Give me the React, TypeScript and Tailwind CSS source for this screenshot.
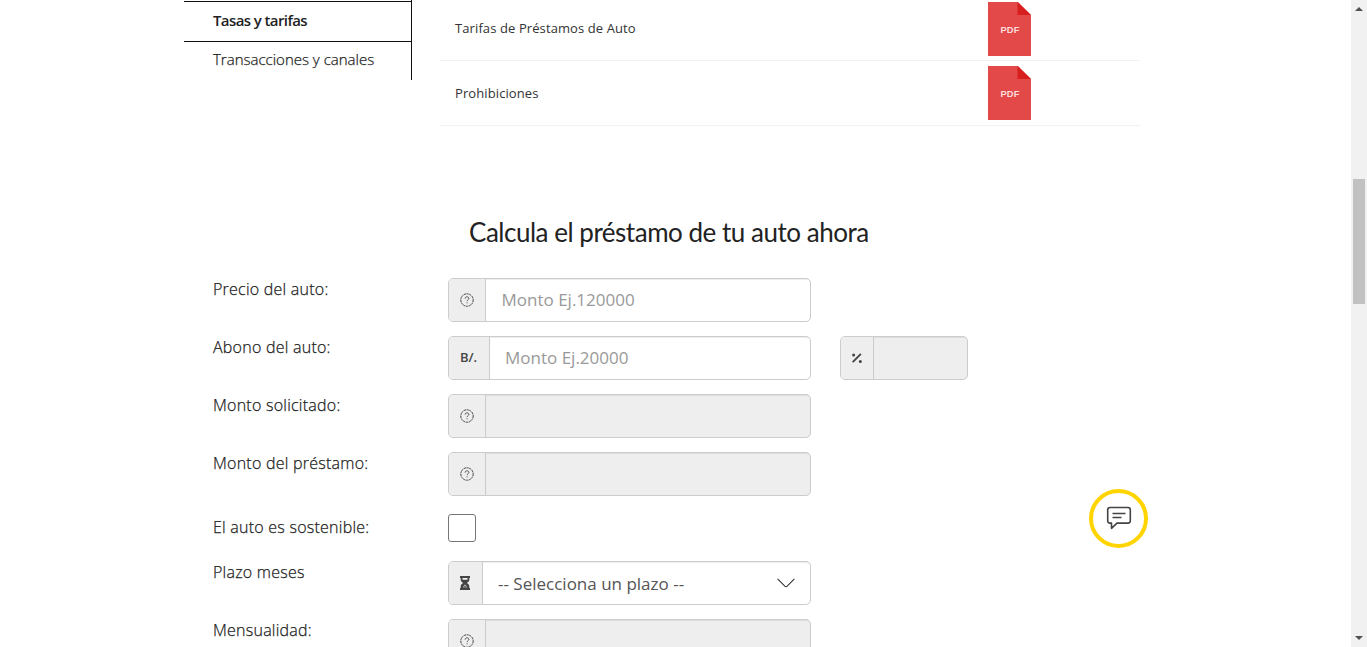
import type { ReactNode } from "react";

function QuestionIcon() {
  return (
    <svg width="14" height="14" viewBox="0 0 14 14" fill="none" stroke="#444" className="mr-px mb-px block">
      <circle cx="7" cy="7" r="6.2" strokeWidth="1" strokeDasharray="2.2 0.6" />
      <path d="M5.1 5.6c0-1.1.8-1.8 1.9-1.8s1.900.7 1.900 1.600c0 1.200-1.800 1.300-1.800 2.700" strokeWidth="0.9" />
      <path d="M7.100 9.300v1" strokeWidth="0.9" />
    </svg>
  );
}

function PercentIcon() {
  return (
    <svg width="12" height="12" viewBox="0 0 12 12" className="block">
      <path d="M2.200 9.600 9.400 2.400" stroke="#444" strokeWidth="1.900" strokeLinecap="round" />
      <circle cx="2.600" cy="2.900" r="1.500" fill="#444" />
      <circle cx="9.300" cy="9.400" r="1.500" fill="#444" />
    </svg>
  );
}

function HourglassIcon() {
  return (
    <svg width="10" height="14" viewBox="0 0 10 14" className="mr-0.5 block" fill="#444">
      <path fillRule="evenodd" d="M0 0h10v2H9.300v2C9.300 5.500 7.800 6.300 6.700 7c1.100.7 2.600 1.500 2.600 3v2H10v2H0v-2h.7v-2c0-1.500 1.500-2.300 2.600-3C2.200 6.300.7 5.500.7 4V2H0zM2.500 2v1.800h5V2zM5 8.600 3 10.800V12h4v-1.200z" />
      <path d="M3 12v-1L5 9.200 7 11v1z" opacity="0.75" />
    </svg>
  );
}

function PdfIcon() {
  return (
    <svg width="43" height="54" viewBox="0 0 43 54" className="block">
      <path d="M0 0h30l13 13v41H0z" fill="#e34948" />
      <path d="M29.500 0 43 13H29.500z" fill="#d61f1e" />
      <text x="22" y="31" textAnchor="middle" fontFamily="Liberation Sans" fontSize="9.500" fontWeight="700" fill="#fbdcdc" textLength="19" lengthAdjust="spacingAndGlyphs">PDF</text>
    </svg>
  );
}

function Field({ addon, addonClass, className = "w-[363px]", disabled = false, children }: {
  addon: ReactNode; addonClass: string; className?: string; disabled?: boolean; children?: ReactNode;
}) {
  return (
    <div className={`flex h-11 overflow-hidden rounded-[5px] border border-[#ccc] ${disabled ? "bg-[#eee]" : "bg-white"} ${className}`}>
      <div className={`flex shrink-0 items-center justify-center border-r border-[#ccc] bg-[#eee] ${addonClass}`}>{addon}</div>
      <div className="flex flex-1 items-center text-[17px] shadow-[inset_0_1px_1px_rgba(0,0,0,0.075)]">{children}</div>
    </div>
  );
}

function Row({ label, className = "mb-3.5 h-11", children }: { label: string; className?: string; children: ReactNode }) {
  return (
    <div className={`flex ${className}`}>
      <div className="w-[235px] shrink-0 text-[16px] leading-[22px] font-light tracking-[0.24px] text-[#222] [-webkit-text-stroke:0.25px_#222]">{label}</div>
      {children}
    </div>
  );
}

export default function App() {
  return (
    <div className="relative flex h-[647px] w-[1367px] overflow-hidden bg-white font-['Open_Sans',sans-serif] text-[#333]">
      <main className="flex-1 overflow-hidden pl-[184px]">
        <div className="flex h-[126px] gap-7">
          <nav className="h-20 w-[228px] shrink-0 border-r border-[#111] pt-px text-[15px]">
            <div className="flex h-[41px] items-center border-y border-[#111] pb-0.5 pl-[29px] font-semibold tracking-[-0.6px] text-[#222]">Tasas y tarifas</div>
            <div className="pt-1.5 pl-[29px] leading-[22px] font-light text-[#222] [-webkit-text-stroke:0.25px_#222]">Transacciones y canales</div>
          </nav>
          <div className="w-[700px] text-[13px] tracking-[0.1px] text-[#333]">
            <div className="flex h-[61px] border-b border-[#f2f2f2] pl-[15px]">
              <div className="w-[533px] pt-[18px] leading-5">Tarifas de Préstamos de Auto</div>
              <div className="pt-0.5"><PdfIcon /></div>
            </div>
            <div className="flex h-[65px] border-b border-[#f2f2f2] pl-[15px]">
              <div className="w-[533px] pt-[22px] leading-5">Prohibiciones</div>
              <div className="pt-[5px]"><PdfIcon /></div>
            </div>
          </div>
        </div>
        <h2 className="mt-[86px] mb-[26px] h-10 pl-[285px] font-['Lato',sans-serif] text-[26px] leading-10 font-normal tracking-[-0.48px] text-[#222]">Calcula el préstamo de tu auto ahora</h2>
        <form className="pl-[29px]">
          <Row label="Precio del auto:">
            <Field addon={<QuestionIcon />} addonClass="w-[37px]"><span className="pl-[15.5px] text-[#999]">Monto Ej.120000</span></Field>
          </Row>
          <Row label="Abono del auto:">
            <Field addon={<span className="text-[13px] font-semibold text-[#444]">B/.</span>} addonClass="w-[41px] pr-px"><span className="pl-[15px] text-[#999]">Monto Ej.20000</span></Field>
            <Field addon={<PercentIcon />} addonClass="w-[33px]" className="ml-[29px] w-32" disabled />
          </Row>
          <Row label="Monto solicitado:"><Field addon={<QuestionIcon />} addonClass="w-[37px]" disabled /></Row>
          <Row label="Monto del préstamo:"><Field addon={<QuestionIcon />} addonClass="w-[37px]" disabled /></Row>
          <Row label="El auto es sostenible:" className="mt-[20px] h-[45px]"><div className="-mt-0.5 size-7 rounded-[3px] border border-[#767676]" /></Row>
          <Row label="Plazo meses">
            <Field addon={<HourglassIcon />} addonClass="w-[34px]">
              <span className="pt-0.5 pl-[15px] text-[#555]">-- Selecciona un plazo --</span>
              <svg width="18" height="10" viewBox="0 0 18 10" className="mr-[15px] ml-auto" fill="none" stroke="#333" strokeWidth="1.100"><path d="m.6.8 7.200 7.300q1.200 1 2.400 0L17.400.8" /></svg>
            </Field>
          </Row>
          <Row label="Mensualidad:"><Field addon={<QuestionIcon />} addonClass="w-[37px]" disabled /></Row>
        </form>
      </main>
      <aside className="flex w-4 flex-col items-center bg-[#f1f1f1]">
        <svg width="8" height="4" viewBox="0 0 8 4" className="mt-[7px] block"><path d="M0 4 4 0l4 4z" fill="#505050" /></svg>
        <div className="mt-[168px] h-[125px] w-3 bg-[#c1c1c1]" />
        <svg width="8" height="4" viewBox="0 0 8 4" className="mt-auto mb-[7px] block"><path d="m0 0 4 4 4-4z" fill="#505050" /></svg>
      </aside>
      <button className="absolute top-[489px] left-[1089px] flex size-[59px] items-center justify-center rounded-full border-4 border-[#ffd400] bg-white">
        <svg width="26" height="26" viewBox="0 0 26 26" fill="none" stroke="#444" strokeWidth="1.600" strokeLinejoin="round" className="mb-0.5 block">
          <path d="M4 2.500h18q2.300 0 2.300 2.300v11q0 2.300-2.300 2.300H11l-5.500 5.200v-5.200H4q-2.300 0-2.300-2.300v-11Q1.700 2.500 4 2.500z" />
          <path d="M6.500 8.500h13M6.500 12.500h9" />
        </svg>
      </button>
    </div>
  );
}
